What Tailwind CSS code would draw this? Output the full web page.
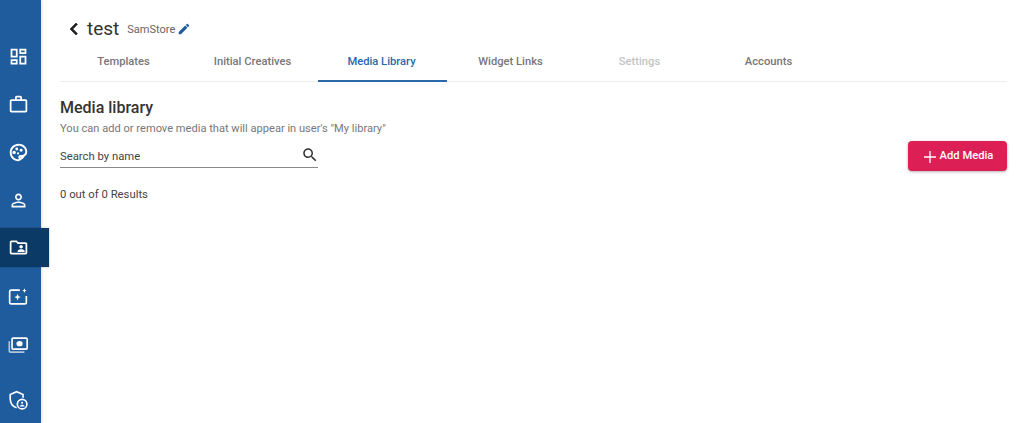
<!DOCTYPE html>
<html lang="en">
<head>
    <meta charset="UTF-8">
    <title>Media library</title>
    <script src="https://cdn.jsdelivr.net/npm/@tailwindcss/browser@4"></script>
</head>
<body class="font-['Roboto',sans-serif] bg-white text-[#333]">
    <div class="flex h-[423px] overflow-hidden">
        <!-- sidebar -->
        <nav class="w-[41px] shrink-0 bg-[#1f5c9e] shadow-[1px_0_3px_rgba(0,0,0,0.12)] text-white flex flex-col pt-[33px] relative z-10">
            <a class="h-[48px] w-[41px] flex items-center justify-center pr-[5px]">
                <svg class="w-[21px] h-[21px]" viewBox="0 0 24 24" fill="currentColor"><path d="M19 5v2h-4V5h4M9 5v6H5V5h4m10 8v6h-4v-6h4M9 17v2H5v-2h4M21 3h-8v6h8V3zM11 3H3v10h8V3zm10 8h-8v10h8V11zm-10 4H3v6h8v-6z"/></svg>
            </a>
            <a class="h-[48px] w-[41px] flex items-center justify-center pr-[5px]">
                <svg class="w-[21px] h-[21px]" viewBox="0 0 24 24" fill="currentColor"><path d="M14 6V4h-4v2h4zM4 8v11h16V8H4zm16-2c1.11 0 2 .89 2 2v11c0 1.11-.89 2-2 2H4c-1.11 0-2-.89-2-2l.01-11c0-1.11.88-2 1.99-2h4V4c0-1.11.89-2 2-2h4c1.11 0 2 .89 2 2v2h4z"/></svg>
            </a>
            <a class="h-[48px] w-[41px] flex items-center justify-center pr-[5px]">
                <svg class="w-[21px] h-[21px]" viewBox="0 0 24 24" fill="currentColor"><path fill-rule="evenodd" d="M12 2C6.49 2 2 6.49 2 12s4.49 10 10 10c1.38 0 2.5-1.12 2.5-2.5 0-.61-.23-1.2-.64-1.67-.08-.1-.13-.21-.13-.33 0-.28.22-.5.5-.5H16c3.31 0 6-2.69 6-6 0-4.96-4.49-9-10-9zM12 4.2c4.3 0 7.8 3 7.8 6.8 0 2.1-1.7 3.8-3.8 3.8h-1.77c-1.38 0-2.5 1.12-2.5 2.5 0 .6.22 1.19.63 1.67.13.15.14.33.14.33 0 .28-.22.5-.5.5-4.3 0-7.8-3.5-7.8-7.8s3.5-7.8 7.8-7.8z"/><path d="M15 15h5l-3 4-4 2.5z"/><circle cx="7" cy="12" r="2"/><circle cx="10" cy="8" r="1.6"/><circle cx="15" cy="9.5" r="1.7"/><circle cx="11.5" cy="13" r="1.2"/></svg>
            </a>
            <a class="h-[48px] w-[41px] flex items-center justify-center pr-[5px]">
                <svg class="w-[21px] h-[21px]" viewBox="0 0 24 24" fill="currentColor"><path d="M12 5.9c1.16 0 2.1.94 2.1 2.1s-.94 2.1-2.1 2.1S9.9 9.16 9.9 8s.94-2.1 2.1-2.1m0 9c2.97 0 6.1 1.46 6.1 2.1v1.1H5.9V17c0-.64 3.13-2.1 6.1-2.1M12 4C9.79 4 8 5.79 8 8s1.79 4 4 4 4-1.79 4-4-1.79-4-4-4zm0 9c-2.67 0-8 1.34-8 4v3h16v-3c0-2.66-5.33-4-8-4z"/></svg>
            </a>
            <a class="h-[39px] w-[49px] mt-[4px] mb-[5px] bg-[#0b3a66] shadow-[0_0_2px_rgba(0,0,0,0.3)] flex items-center justify-start pl-[8px] pt-[1px]">
                <svg class="w-[21px] h-[21px]" viewBox="0 0 24 24" fill="currentColor"><path d="M20 6h-8l-2-2H4c-1.1 0-1.99.9-1.99 2L2 18c0 1.1.9 2 2 2h16c1.1 0 2-.9 2-2V8c0-1.1-.9-2-2-2zm0 12H4V6h5.17l2 2H20v10zm-5-5c1.1 0 2-.9 2-2s-.9-2-2-2-2 .9-2 2 .9 2 2 2zm-4 4h8v-1c0-1.33-2.67-2-4-2s-4 .67-4 2v1z"/></svg>
            </a>
            <a class="h-[48px] w-[41px] flex items-center justify-center pr-[5px] pt-[2px]">
                <svg class="w-[22px] h-[22px]" viewBox="0 0 24 24" fill="none" stroke="currentColor" stroke-width="1.8"><path d="M14 4.5H4.5a1.6 1.6 0 0 0-1.6 1.6v11.8a1.6 1.6 0 0 0 1.6 1.6h15a1.6 1.6 0 0 0 1.6-1.6V11"/><path fill="currentColor" stroke="none" d="M11.5 8.5l1 2.6 2.6 1-2.6 1-1 2.6-1-2.6-2.6-1 2.6-1zM19 2.5l.7 1.8 1.8.7-1.8.7L19 7.5l-.7-1.8-1.8-.7 1.8-.7z"/></svg>
            </a>
            <a class="h-[48px] w-[41px] flex items-center justify-center pr-[5px] pt-[4px]">
                <svg class="w-[22px] h-[22px]" viewBox="0 0 24 24" fill="none" stroke="currentColor"><rect x="5.5" y="4.5" width="16.5" height="12" rx="1.2" stroke-width="1.8"/><ellipse cx="13.7" cy="10.5" rx="3.4" ry="2.8" fill="currentColor" stroke="none"/><path d="M2.5 8v10.5a1.2 1.2 0 0 0 1.2 1.2H19" stroke-width="1.8" stroke-opacity="0.65"/></svg>
            </a>
            <a class="h-[48px] w-[41px] flex items-center justify-center pr-[5px] pt-[2px] mt-[8px]">
                <svg class="w-[22px] h-[22px]" viewBox="0 0 24 24" fill="none" stroke="currentColor" stroke-width="1.8"><path d="M10.5 20.5C6.5 19.5 3.5 15.5 3.5 11V6l7-3 7 3v3.5"/><circle cx="16.5" cy="16.5" r="5.2"/><circle cx="16.5" cy="15" r="1.2" fill="currentColor" stroke="none"/><path fill="currentColor" stroke="none" d="M13.8 19c.4-1.1 1.5-1.8 2.7-1.8s2.3.7 2.7 1.8z"/></svg>
            </a>
        </nav>

        <!-- main -->
        <main class="flex-1 pl-[19px] pr-[17px]">
            <div class="flex items-center h-[42px] pt-[16px] pl-[2px]">
                <svg class="w-[24px] h-[24px] text-[#222]" viewBox="0 0 24 24" fill="currentColor" stroke="currentColor" stroke-width="0.7"><path d="M15.41 7.41L14 6l-6 6 6 6 1.41-1.41L10.83 12z"/></svg>
                <h1 class="text-[19px] leading-[26px] ml-[1px] text-[#333]">test</h1>
                <span class="text-[11px] ml-[8px] mt-[3px] text-[#666]">SamStore</span>
                <svg class="w-[14px] h-[14px] ml-[2px] text-[#1f5c9e]" viewBox="0 0 24 24" fill="currentColor"><path d="M3 17.25V21h3.75L17.81 9.94l-3.75-3.75L3 17.25zM20.71 7.04c.39-.39.39-1.02 0-1.41l-2.34-2.34c-.39-.39-1.02-.39-1.41 0l-1.83 1.83 3.75 3.75 1.83-1.83z"/></svg>
            </div>

            <div class="flex h-[40px] border-b border-[#eeeeee] text-[11.2px] font-medium text-[#777]">
                <a class="w-[129px] flex items-center justify-center pt-[2px] pr-[2px]">Templates</a>
                <a class="w-[129px] flex items-center justify-center pt-[2px] pr-[2px]">Initial Creatives</a>
                <a class="w-[129px] flex items-center justify-center pt-[2px] pr-[2px] text-[#2a68a8] border-b-2 border-[#2a68a8] h-[40px]">Media Library</a>
                <a class="w-[129px] flex items-center justify-center pt-[2px] pr-[2px]">Widget Links</a>
                <a class="w-[129px] flex items-center justify-center pt-[2px] pr-[2px] text-[#c4c4c4]">Settings</a>
                <a class="w-[129px] flex items-center justify-center pt-[2px] pr-[2px]">Accounts</a>
            </div>

            <h2 class="text-[16px] leading-[20px] font-medium mt-[16px] text-[#333]">Media library</h2>
            <p class="text-[11.1px] leading-[16px] mt-[3px] text-[#777]">You can add or remove media that will appear in user's "My library"</p>

            <div class="flex justify-between items-start mt-[5px]">
                <div class="w-[258px] h-[26px] border-b border-[#8a8a8a] flex items-center justify-between pt-[5px]">
                    <span class="text-[11.3px] text-[#444]">Search by name</span>
                    <svg class="w-[18px] h-[18px] mr-[-1px] mb-[5px] text-[#333]" viewBox="0 0 24 24" fill="currentColor"><path d="M15.5 14h-.79l-.28-.27C15.41 12.59 16 11.11 16 9.5 16 5.91 13.09 3 9.5 3S3 5.91 3 9.5 5.91 16 9.5 16c1.61 0 3.09-.59 4.23-1.57l.27.28v.79l5 4.99L20.49 19l-4.99-5zm-6 0C7.01 14 5 11.99 5 9.5S7.01 5 9.5 5 14 7.01 14 9.5 11.99 14 9.5 14z"/></svg>
                </div>
                <button class="w-[99px] h-[30px] mt-[-1px] pt-[1px] bg-[#dc1f55] text-white rounded-[4px] shadow-[0_1px_3px_rgba(0,0,0,0.3)] flex items-center justify-center text-[11.2px] font-medium">
                    <svg class="w-[16px] h-[16px] mr-[2px]" viewBox="0 0 24 24" fill="currentColor"><path d="M21 13h-8v8h-2v-8H3v-2h8V3h2v8h8z"/></svg>
                    Add Media
                </button>
            </div>

            <p class="text-[11.3px] leading-[16px] mt-[16px] text-[#444]">0 out of 0 Results</p>
        </main>
    </div>
</body>
</html>
